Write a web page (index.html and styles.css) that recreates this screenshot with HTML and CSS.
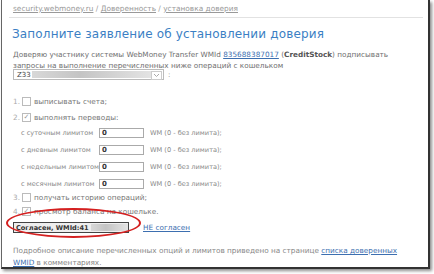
FILE: index.html
```html
<!DOCTYPE html>
<html lang="ru">
<head>
<meta charset="utf-8">
<link rel="stylesheet" href="styles.css">
</head>
<body>
<div class="frame">
  <div class="crumbs"><a>security.webmoney.ru</a> / <a>Доверенность</a> / <a>установка доверия</a></div>
  <h1 class="title">Заполните заявление об установлении доверия</h1>
  <p class="intro">Доверяю участнику системы WebMoney Transfer WMId <a class="link">835688387017</a> (<b>CreditStock</b>) подписывать запросы на выполнение перечисленных ниже операций с кошельком</p>
  <div class="purse-row">
    <div class="select"><span class="sel-text">Z33</span><span class="blur blur-sel"></span><span class="arrow"><svg width="7" height="5" viewBox="0 0 7 5"><path d="M1 1 L3.5 3.5 L6 1" fill="none" stroke="#aaa" stroke-width="1"/></svg></span></div>
    <span class="colon">:</span>
  </div>
  <div class="opt opt1"><span class="num">1.</span><span class="cb"></span><span>выписывать счета;</span></div>
  <div class="opt opt2"><span class="num">2.</span><span class="cb checked">✓</span><span>выполнять переводы:</span></div>
  <div class="limits">
    <div class="limit"><span class="lbl">с суточным лимитом</span><span class="inp">0</span><span>WM (0 - без лимита);</span></div>
    <div class="limit"><span class="lbl">с дневным лимитом</span><span class="inp">0</span><span>WM (0 - без лимита);</span></div>
    <div class="limit"><span class="lbl">с недельным лимитом</span><span class="inp">0</span><span>WM (0 - без лимита);</span></div>
    <div class="limit"><span class="lbl">с месячным лимитом</span><span class="inp">0</span><span>WM (0 - без лимита);</span></div>
  </div>
  <div class="opt opt3"><span class="num">3.</span><span class="cb"></span><span>получать историю операций;</span></div>
  <div class="opt opt4"><span class="num">4.</span><span class="cb checked">✓</span><span>просмотр баланса на кошельке.</span></div>
  <div class="actions">
    <span class="btn">Согласен, WMId:41<span class="blur blur-btn"></span></span>
    <a class="link nope">НЕ согласен</a>
  </div>
  <p class="footer">Подробное описание перечисленных опций и лимитов приведено на странице <a class="link">списка доверенных WMID</a> в комментариях.</p>
  <div class="ellipse"></div>
</div>
</body>
</html>
```
FILE: styles.css
```css
html, body { margin: 0; padding: 0; background: #fff; }
body { width: 434px; height: 274px; overflow: hidden; font-family: "DejaVu Sans", Verdana, sans-serif; color: #777; }
.frame {
  position: relative;
  box-sizing: border-box;
  width: 429px; height: 269px;
  margin-left: 1px;
  border-left: 1px solid #666;
  border-right: 2px solid #333;
  border-bottom: 2px solid #333;
  box-shadow: 2px 2px 3px rgba(0,0,0,0.45);
  background: #fff;
  padding: 0 0 0 10px;
}
.crumbs {
  font-size: 7.4px; line-height: 9px; color: #999;
  padding: 4px 0 4px 4px;
  margin-left: -3px;
  width: 410px;
  border-bottom: 1px solid #e2e2e2;
}
.crumbs a { text-decoration: underline; color: #999; }
.title { font-size: 12px; font-weight: normal; color: #3b7fc4; margin: 8px 0 0 0; line-height: 16px; letter-spacing: 0.15px; }
.intro { font-size: 7.3px; line-height: 11px; margin: 7px 0 0 1px; width: 400px; color: #707070; }
.intro b { color: #555; }
.link { color: #3d6fb0; text-decoration: underline; }
.purse-row { display: flex; align-items: center; margin-top: -2px; margin-left: 1px; }
.select { position: relative; width: 151px; height: 11px; border: 1px solid #bbb; box-sizing: border-box; display: flex; align-items: center; font-size: 7px; color: #444; }
.sel-text { padding-left: 3px; }
.blur { display: inline-block; background: linear-gradient(90deg, #d8d8d8, #c4c4c4 40%, #d4d4d4 70%, #e4e4e4); filter: blur(0.6px); }
.blur-sel { width: 120px; height: 7px; margin-left: 1px; }
.arrow { position: absolute; right: 1px; top: 1px; width: 9px; height: 7px; border: 1px solid #ccc; display: flex; align-items: center; justify-content: center; }
.colon { font-size: 7px; margin-left: 4px; }
.opt { display: flex; align-items: center; font-size: 7.3px; height: 10px; margin-left: 1px; white-space: nowrap; }
.num { color: #aaa; width: 9px; }
.cb { width: 7px; height: 7px; border: 1px solid #bbb; margin-right: 3px; font-size: 7px; line-height: 7px; text-align: center; color: #999; }
.opt1 { margin-top: 16px; }
.opt2 { margin-top: 6px; }
.limits { margin-left: 9px; margin-top: 5px; }
.limit { display: flex; align-items: center; font-size: 6.6px; height: 12px; margin-bottom: 5px; white-space: nowrap; color: #888; }
.limit:last-child { margin-bottom: 0; }
.lbl { width: 78px; flex-shrink: 0; }
.inp { width: 45px; height: 10px; flex-shrink: 0; box-sizing: border-box; border: 1px solid #aaa; font-size: 7px; line-height: 8px; padding-left: 2px; color: #333; font-weight: bold; margin-right: 6px; }
.opt3 { margin-top: 2px; }
.opt4 { margin-top: 4px; }
.actions { display: flex; align-items: center; margin-top: 6px; margin-left: 1px; }
.btn { display: flex; align-items: center; flex-shrink: 0; white-space: nowrap; width: 116px; height: 11px; box-sizing: border-box; border: 1px solid #444; background: #eee; font-size: 6.6px; font-weight: bold; color: #333; padding-left: 2px; }
.blur-btn { width: 62px; height: 7px; margin-left: 2px; }
.nope { font-size: 7.3px; margin-left: 14px; white-space: nowrap; }
.footer { font-size: 7.3px; line-height: 12px; margin: 12px 0 0 1px; width: 400px; color: #888; }
.ellipse { position: absolute; left: 4px; top: 208px; width: 135px; height: 30px; border: 2.5px solid #d42020; border-radius: 50%; box-sizing: border-box; }
```
